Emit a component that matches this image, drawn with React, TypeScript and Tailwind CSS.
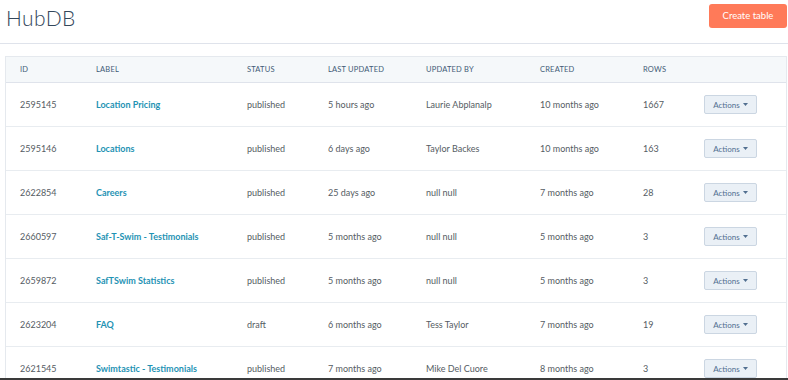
const rows = [
  { id: "2595145", label: "Location Pricing", status: "published", updated: "5 hours ago", by: "Laurie Abplanalp", created: "10 months ago", count: "1667" },
  { id: "2595146", label: "Locations", status: "published", updated: "6 days ago", by: "Taylor Backes", created: "10 months ago", count: "163" },
  { id: "2622854", label: "Careers", status: "published", updated: "25 days ago", by: "null null", created: "7 months ago", count: "28" },
  { id: "2660597", label: "Saf-T-Swim - Testimonials", status: "published", updated: "5 months ago", by: "null null", created: "5 months ago", count: "3" },
  { id: "2659872", label: "SafTSwim Statistics", status: "published", updated: "5 months ago", by: "null null", created: "5 months ago", count: "3" },
  { id: "2623204", label: "FAQ", status: "draft", updated: "6 months ago", by: "Tess Taylor", created: "7 months ago", count: "19" },
  { id: "2621545", label: "Swimtastic - Testimonials", status: "published", updated: "7 months ago", by: "Mike Del Cuore", created: "8 months ago", count: "3" },
];

const cols = "grid grid-cols-[76px_151px_81px_98px_114px_103px_61px_97px]";
const headers = ["ID", "LABEL", "STATUS", "LAST UPDATED", "UPDATED BY", "CREATED", "ROWS", ""];

function ActionsButton() {
  return (
    <button className="flex items-center justify-center gap-[3px] w-[53px] h-[19px] bg-[#eaf0f6] border border-[#cbd6e2] rounded-[2px] text-[8px] text-[#516f90]">
      Actions
      <svg width="5" height="3" viewBox="0 0 5 3">
        <path d="M0 0h5L2.5 3z" fill="#516f90" />
      </svg>
    </button>
  );
}

export default function App() {
  return (
    <div className="w-[788px] h-[380px] overflow-hidden bg-white font-['Lato',sans-serif] border-b-2 border-[#3a3a3a]">
      <div className="h-[44px] flex items-start justify-between border-b border-[#dfe3eb]">
        <h1 className="ml-[6px] mt-[2px] text-[21px] font-light text-[#33475b] tracking-[0.4px]">HubDB</h1>
        <button className="mt-[4px] mr-[1px] w-[78px] h-[24px] bg-[#ff7a59] rounded-[3px] text-[9.5px] text-white">
          Create table
        </button>
      </div>

      <div className="mt-[12px] ml-[5px] mr-[1px] border-l border-r border-t border-[#e5e9ee]">
        <div className={`${cols} h-[26px] items-center bg-[#f5f8fa] border-b border-[#dfe3eb]`}>
          {headers.map((h, i) => (
            <div key={i} className="pl-[14px] text-[7.5px] text-[#425b76] tracking-[0.2px]">{h}</div>
          ))}
        </div>
        {rows.map((r) => (
          <div key={r.id} className={`${cols} h-[44px] items-center border-b border-[#e8ecf0] text-[9px] text-[#555c63]`}>
            <div className="pl-[14px]">{r.id}</div>
            <div className="pl-[14px] font-bold text-[#1f93b4]">{r.label}</div>
            <div className="pl-[14px]">{r.status}</div>
            <div className="pl-[14px]">{r.updated}</div>
            <div className="pl-[14px]">{r.by}</div>
            <div className="pl-[14px]">{r.created}</div>
            <div className="pl-[14px]">{r.count}</div>
            <div className="pl-[14px]">
              <ActionsButton />
            </div>
          </div>
        ))}
      </div>
    </div>
  );
}
